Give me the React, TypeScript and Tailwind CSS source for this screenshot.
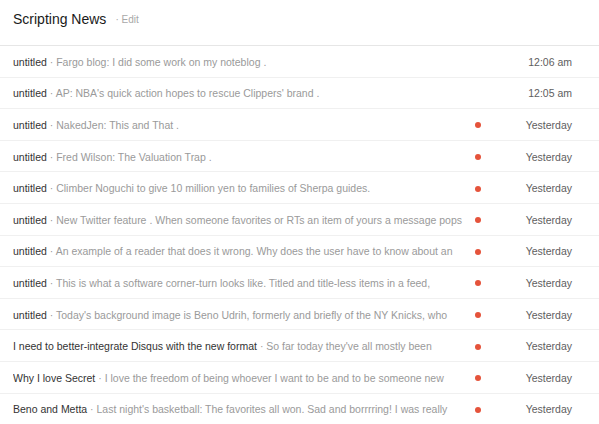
import React from "react";

type Item = { title: string; text: string; time: string; dot: boolean };

const items: Item[] = [
  { title: "untitled", text: "Fargo blog: I did some work on my noteblog .", time: "12:06 am", dot: false },
  { title: "untitled", text: "AP: NBA's quick action hopes to rescue Clippers' brand .", time: "12:05 am", dot: false },
  { title: "untitled", text: "NakedJen: This and That .", time: "Yesterday", dot: true },
  { title: "untitled", text: "Fred Wilson: The Valuation Trap .", time: "Yesterday", dot: true },
  { title: "untitled", text: "Climber Noguchi to give 10 million yen to families of Sherpa guides.", time: "Yesterday", dot: true },
  { title: "untitled", text: "New Twitter feature . When someone favorites or RTs an item of yours a message pops", time: "Yesterday", dot: true },
  { title: "untitled", text: "An example of a reader that does it wrong. Why does the user have to know about an", time: "Yesterday", dot: true },
  { title: "untitled", text: "This is what a software corner-turn looks like. Titled and title-less items in a feed,", time: "Yesterday", dot: true },
  { title: "untitled", text: "Today's background image is Beno Udrih, formerly and briefly of the NY Knicks, who", time: "Yesterday", dot: true },
  { title: "I need to better-integrate Disqus with the new format", text: "So far today they've all mostly been", time: "Yesterday", dot: true },
  { title: "Why I love Secret", text: "I love the freedom of being whoever I want to be and to be someone new", time: "Yesterday", dot: true },
  { title: "Beno and Metta", text: "Last night's basketball: The favorites all won. Sad and borrrring! I was really", time: "Yesterday", dot: true },
];

export default function App() {
  return (
    <div
      className="w-[599px] h-[424px] overflow-hidden bg-white"
      style={{ fontFamily: '"Liberation Sans", Arial, Helvetica, sans-serif' }}
    >
      <div className="h-[46px] flex items-start pl-[13px] pt-[9px] border-b border-[#e6e6e6]">
        <span className="text-[14px] leading-[20px] text-[#1a1a1a]">Scripting News</span>
        <span className="text-[10px] leading-[20px] text-[#a8a8a8] ml-[9px] pt-[1px]">· Edit</span>
      </div>
      {items.map((it, i) => (
        <div
          key={i}
          className="h-[31.6px] flex items-center border-b border-[#f0f0f0] pl-[13px] pt-[2px]"
        >
          <div className="w-[455px] h-[15px] leading-[15px] overflow-hidden whitespace-nowrap text-[10.5px]">
            <span className="text-[#333333]">{it.title}</span>
            <span className="text-[#9a9a9a]"> · {it.text}</span>
          </div>
          <div className="w-[20px] flex justify-center">
            {it.dot && <div className="w-[6px] h-[6px] rounded-full bg-[#e5533b]" />}
          </div>
          <div className="flex-1 text-right pr-[27px] text-[10.5px] leading-[15px] text-[#5e5e5e]">
            {it.time}
          </div>
        </div>
      ))}
    </div>
  );
}
